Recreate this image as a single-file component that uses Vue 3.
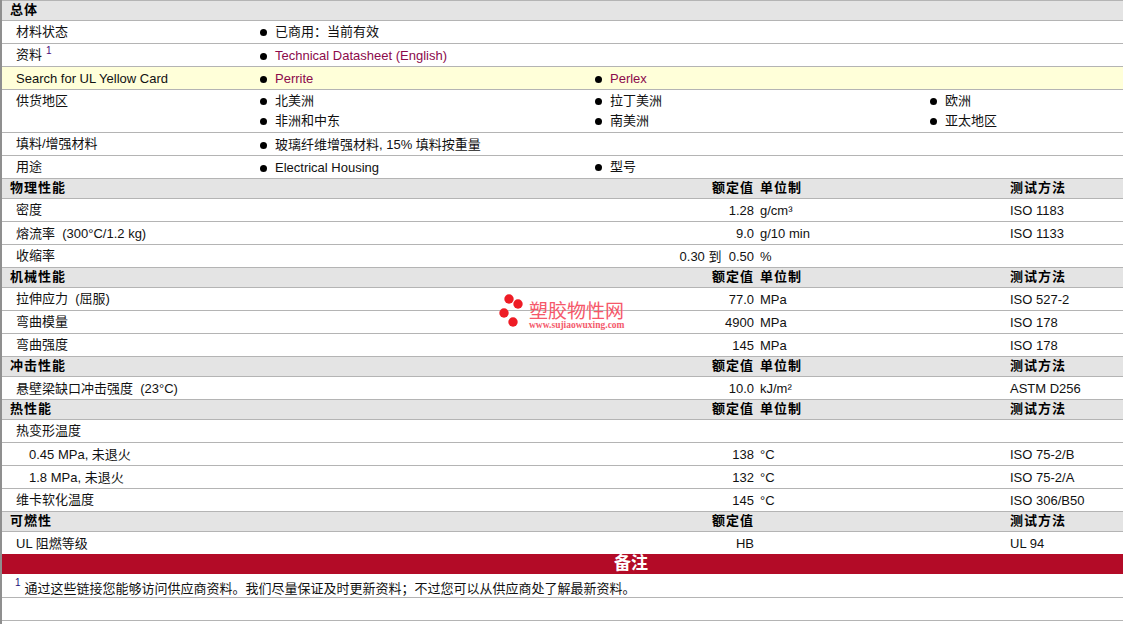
<script setup>
const H = (title, a, b, c) => ({ type: 'head', title, a, b, c })
const R = (label, value, unit, method, indent, last) => ({ type: 'data', label, value, unit, method, indent, last })
const isCjk = (text) => !/[A-Za-z0-9]/.test(text)
const groups = [
  { type: 'head', title: '总体' },
  { type: 'info', label: '材料状态', items: [['已商用：当前有效']] },
  { type: 'info', label: '资料', sup: '1', link: true, items: [['Technical Datasheet (English)']] },
  { type: 'info', label: 'Search for UL Yellow Card', link: true, yellow: true, items: [['Perrite', 'Perlex']] },
  { type: 'info', label: '供货地区', items: [['北美洲', '拉丁美洲', '欧洲'], ['非洲和中东', '南美洲', '亚太地区']] },
  { type: 'info', label: '填料/增强材料', items: [['玻璃纤维增强材料, 15% 填料按重量']] },
  { type: 'info', label: '用途', items: [['Electrical Housing', '型号']] },
  H('物理性能', '额定值', '单位制', '测试方法'),
  R('密度', '1.28', 'g/cm³', 'ISO 1183'),
  R('熔流率  (300°C/1.2 kg)', '9.0', 'g/10 min', 'ISO 1133'),
  R('收缩率', '0.30 到  0.50', '%', ''),
  H('机械性能', '额定值', '单位制', '测试方法'),
  R('拉伸应力  (屈服)', '77.0', 'MPa', 'ISO 527-2'),
  R('弯曲模量', '4900', 'MPa', 'ISO 178'),
  R('弯曲强度', '145', 'MPa', 'ISO 178'),
  H('冲击性能', '额定值', '单位制', '测试方法'),
  R('悬壁梁缺口冲击强度  (23°C)', '10.0', 'kJ/m²', 'ASTM D256'),
  H('热性能', '额定值', '单位制', '测试方法'),
  R('热变形温度', '', '', ''),
  R('0.45 MPa, 未退火', '138', '°C', 'ISO 75-2/B', true),
  R('1.8 MPa, 未退火', '132', '°C', 'ISO 75-2/A', true),
  R('维卡软化温度', '145', '°C', 'ISO 306/B50'),
  H('可燃性', '额定值', '', '测试方法'),
  R('UL 阻燃等级', 'HB', '', 'UL 94', false, true),
]
</script>

<template>
  <div class="page">
    <template v-for="(row, i) in groups" :key="i">
      <div v-if="row.type === 'head'" class="row head">
        <div class="title">{{ row.title }}</div>
        <div class="value">{{ row.a }}</div>
        <div class="unit">{{ row.b }}</div>
        <div class="method">{{ row.c }}</div>
      </div>
      <div v-else-if="row.type === 'info'" class="row info" :class="{ yellow: row.yellow, double: row.items.length > 1 }">
        <div class="label" :class="{ cjk: isCjk(row.label) }">{{ row.label }}<sup v-if="row.sup" class="sup">{{ row.sup }}</sup></div>
        <div class="lists">
          <div v-for="(line, j) in row.items" :key="j" class="line">
            <div v-for="(item, k) in line" :key="k" class="item" :class="{ link: row.link, cjk: isCjk(item) }">
              <span class="dot"></span>{{ item }}
            </div>
          </div>
        </div>
      </div>
      <div v-else class="row data" :class="{ last: row.last }">
        <div class="label" :class="{ indent: row.indent, cjk: isCjk(row.label) }">{{ row.label }}</div>
        <div class="value">{{ row.value }}</div>
        <div class="unit">{{ row.unit }}</div>
        <div class="method">{{ row.method }}</div>
      </div>
    </template>
    <div class="notes-title"><span>备注</span></div>
    <div class="note"><sup class="note-sup">1</sup><span>通过这些链接您能够访问供应商资料。我们尽量保证及时更新资料；不过您可以从供应商处了解最新资料。</span></div>
    <div class="note empty"></div>
    <div class="mark">
      <svg class="dots" width="26" height="33" viewBox="0 0 26 33">
        <circle cx="10" cy="5" r="4.7" fill="#ee1c25" />
        <circle cx="19" cy="10" r="4.7" fill="#ee1c25" />
        <circle cx="5" cy="19" r="4.7" fill="#ee1c25" />
        <circle cx="14" cy="28" r="4.7" fill="#ee1c25" />
      </svg>
      <div class="mark-text">
        <div class="mark-cn">塑胶物性网</div>
        <div class="mark-url">www.sujiaowuxing.com</div>
      </div>
    </div>
  </div>
</template>

<style>
html, body { margin: 0; background: #fff; overflow: hidden; }
</style>

<style scoped>
.page {
  position: relative;
  width: 1123px;
  height: 624px;
  box-sizing: border-box;
  border-left: 2px solid #8f8f8f;
  overflow: hidden;
  font: 13px "Liberation Sans", "Noto Sans CJK SC", sans-serif;
  color: #111;
  white-space: pre;
}
.row {
  display: flex;
  box-sizing: border-box;
  border-bottom: 1px solid #b4b4b4;
  height: 23px;
  line-height: 24px;
}
.row.last { height: 22px; border-bottom: 0; }
.head {
  height: 20px;
  line-height: 18px;
  background: #e4e4e4;
  font-weight: bold;
  letter-spacing: 1px;
  color: #000;
}
.page > .head:first-child { height: 21px; border-top: 1px solid #b4b4b4; }
.title { padding-left: 8px; flex: none; width: 400px; box-sizing: border-box; }
.label { flex: none; padding-left: 14px; box-sizing: border-box; width: 258px; }
.label.cjk { line-height: 22px; }
.label.indent { padding-left: 27px; }
.data .label { width: 400px; }
.value { flex: none; width: 352px; text-align: right; }
.unit { flex: none; width: 256px; padding-left: 6px; box-sizing: border-box; }
.method { flex: 1; }
.info.double { height: 43px; }
.yellow { background: #ffffd9; }
.lists { flex: 1; display: flex; flex-direction: column; padding-top: 1px; }
.line { display: flex; height: 22px; line-height: 22px; }
.double .line { height: 20px; line-height: 20px; }
.item { flex: none; width: 335px; display: flex; align-items: center; box-sizing: border-box; }
.info:not(.double) .item.cjk { padding-bottom: 2px; }
.item.link { color: #8c0a4b; }
.dot {
  width: 7px;
  height: 7px;
  border-radius: 50%;
  background: #000;
  margin-right: 8px;
  flex: none;
}
.sup { font-size: 10px; color: #4b0a7a; line-height: 0; vertical-align: 5px; margin-left: 4px; }
.notes-title {
  height: 20px;
  line-height: 20px;
  background: #b30b27;
  color: #fff;
  font-size: 17px;
  font-weight: bold;
  padding-left: 612px;
}
.note {
  box-sizing: border-box;
  height: 24px;
  line-height: 29px;
  border-bottom: 1px solid #b4b4b4;
  padding-left: 13px;
  display: flex;
  font-size: 13px;
}
.note.empty { height: 23px; }
.note-sup { font-size: 10px; line-height: 18px; color: #23107a; margin: 0 4px 0 0; }
.mark {
  position: absolute;
  left: 497px;
  top: 294px;
  display: flex;
  gap: 4px;
  pointer-events: none;
}
.mark-text { padding-top: 8px; }
.mark-cn { font-size: 19px; line-height: 20px; color: #f6586a; }
.mark-url { font: bold 9.5px/7px "Liberation Serif", serif; color: #f45a6c; }
</style>
